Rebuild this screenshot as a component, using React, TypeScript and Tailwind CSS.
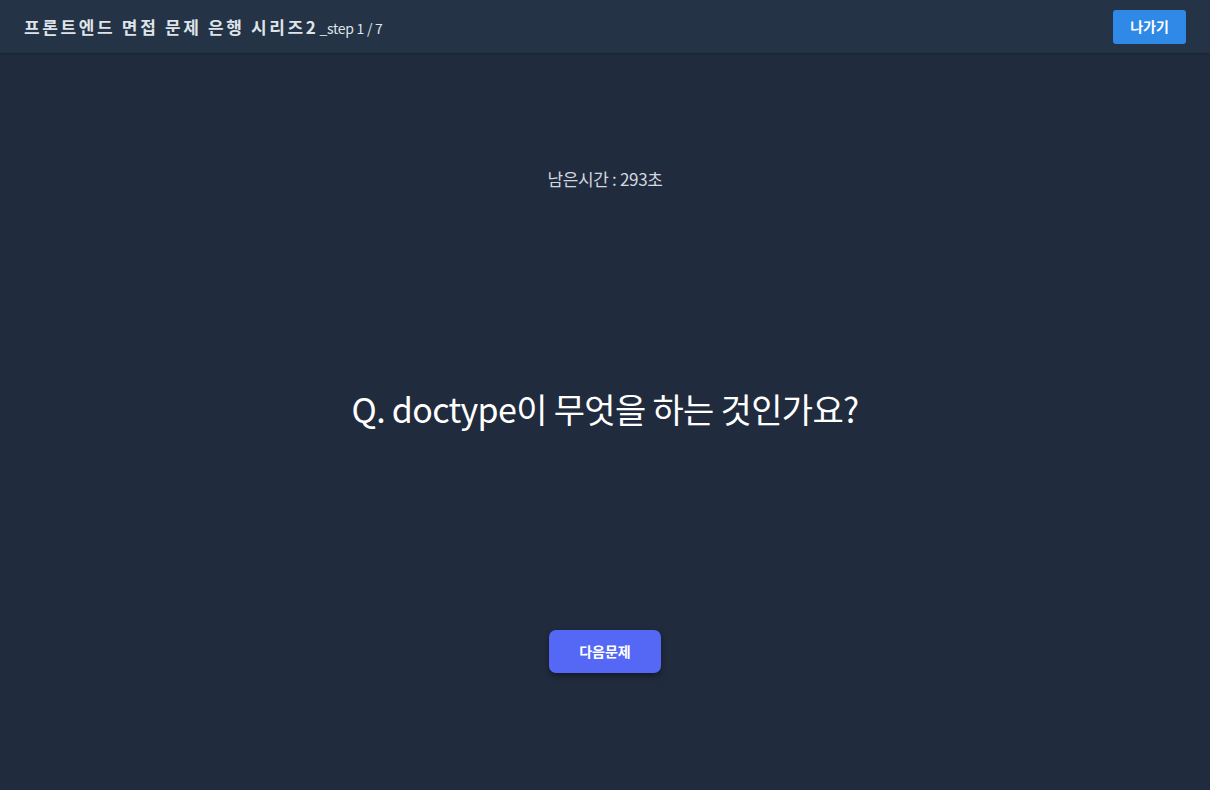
import React from "react";

export default function App() {
  return (
    <div
      className="w-[1210px] h-[790px] bg-[#202b3d] flex flex-col overflow-hidden"
      style={{ fontFamily: '"Noto Sans CJK KR", "Noto Sans", sans-serif' }}
    >
      <header className="h-[53px] bg-[#243345] flex items-center justify-between pl-[24px] pr-[24px] shadow-[0_1px_2px_rgba(0,0,0,0.2)]">
        <div className="flex items-baseline text-[#dfe3ea]">
          <span className="text-[17px] font-bold tracking-[0.155em]">프론트엔드 면접 문제 은행 시리즈2</span>
          <span className="text-[14px] ml-[1px] tracking-[-0.02em]">_step 1 / 7</span>
        </div>
        <button className="w-[73px] h-[34px] rounded-[3px] bg-[#2f89e6] text-white text-[14px] font-bold">
          나가기
        </button>
      </header>
      <main className="flex-1 flex flex-col items-center">
        <div className="mt-[113px] text-[17px] text-[#d3d8e0] tracking-[-0.02em]">남은시간 : 293초</div>
        <div className="mt-[192px] text-[34px] text-white tracking-[-0.02em] leading-[50px]">
          Q. doctype이 무엇을 하는 것인가요?
        </div>
        <button className="mt-[196px] w-[112px] h-[43px] rounded-[7px] bg-[#5468f5] text-white text-[14px] font-bold shadow-[0_3px_6px_rgba(0,0,0,0.4)]">
          다음문제
        </button>
      </main>
    </div>
  );
}
